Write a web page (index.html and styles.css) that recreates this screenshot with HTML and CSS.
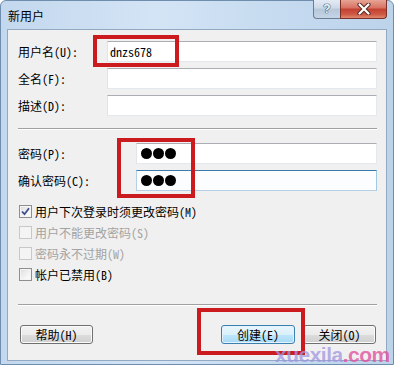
FILE: index.html
```html
<!DOCTYPE html>
<html lang="zh-CN">
<head>
<meta charset="utf-8">
<title>新用户</title>
<link rel="stylesheet" href="styles.css">
</head>
<body>
<div class="window">
  <div class="titlebar">
    <span class="title">新用户</span>
    <div class="caption">
      <div class="cap-help"><span class="qmark">?</span></div>
      <div class="cap-close">
        <svg width="14" height="12" viewBox="0 0 14 12">
          <path d="M2.5 1.5 L11.5 10.5 M11.5 1.5 L2.5 10.5" stroke="#5a2a26" stroke-width="4.2" stroke-linecap="round"/>
          <path d="M2.5 1.5 L11.5 10.5 M11.5 1.5 L2.5 10.5" stroke="#ffffff" stroke-width="2.2" stroke-linecap="round"/>
        </svg>
      </div>
    </div>
  </div>
  <div class="client">
    <div class="row">
      <span class="label">用户名(U):</span>
      <div class="input wide">dnzs678</div>
    </div>
    <div class="row">
      <span class="label">全名(F):</span>
      <div class="input wide"></div>
    </div>
    <div class="row">
      <span class="label">描述(D):</span>
      <div class="input wide"></div>
    </div>
    <div class="sep sep1"></div>
    <div class="row">
      <span class="label">密码(P):</span>
      <div class="input narrow"><span class="dots"><i></i><i></i><i></i></span></div>
    </div>
    <div class="row">
      <span class="label">确认密码(C):</span>
      <div class="input narrow focused"><span class="dots"><i></i><i></i><i></i></span></div>
    </div>
    <div class="checks">
      <div class="check">
        <span class="box checked">
          <svg width="9" height="9" viewBox="0 0 9 9"><path d="M1 4.5 L3.5 7.2 L8 1.2" fill="none" stroke="#3e4d8a" stroke-width="1.8"/></svg>
        </span>
        <span>用户下次登录时须更改密码(M)</span>
      </div>
      <div class="check disabled">
        <span class="box"></span>
        <span>用户不能更改密码(S)</span>
      </div>
      <div class="check disabled">
        <span class="box"></span>
        <span>密码永不过期(W)</span>
      </div>
      <div class="check">
        <span class="box"></span>
        <span>帐户已禁用(B)</span>
      </div>
    </div>
    <div class="sep sep2"></div>
    <div class="buttons">
      <div class="btn">帮助(H)</div>
      <div class="spacer"></div>
      <div class="btn default">创建(E)</div>
      <div class="btn">关闭(O)</div>
    </div>
  </div>
  <div class="mark mark1"></div>
  <div class="mark mark2"></div>
  <div class="mark mark3"></div>
  <div class="watermark"><span class="wm-a">xuexila</span><span class="wm-b">.com</span></div>
</div>
</body>
</html>
```
FILE: styles.css
```css
html, body {
  margin: 0;
  padding: 0;
}
body {
  width: 394px;
  height: 365px;
  overflow: hidden;
  font-family: "Noto Sans Mono CJK SC", "Noto Sans CJK SC", sans-serif;
  font-size: 12px;
  color: #000;
}
.window {
  position: relative;
  width: 394px;
  height: 365px;
  box-sizing: border-box;
  border: 1px solid #6f8eae;
  border-radius: 6px 6px 0 0;
  background: linear-gradient(90deg, #c3d8ee 0%, #d3e4f5 40%, #c6dbf0 70%, #bcd3ea 100%);
  display: flex;
  flex-direction: column;
}
.titlebar {
  height: 28px;
  display: flex;
  align-items: flex-start;
  padding-left: 7px;
  padding-right: 6px;
}
.title {
  margin-top: 7px;
  line-height: 16px;
  font-size: 12px;
  letter-spacing: 0;
}
.caption {
  margin-left: auto;
  display: flex;
  margin-top: -1px;
}
.cap-help {
  width: 27px;
  height: 19px;
  box-sizing: border-box;
  border: 1px solid #6c7d92;
  border-top: none;
  border-right: none;
  border-radius: 0 0 0 4px;
  background: linear-gradient(#e3ebf5 0%, #cdd9e7 45%, #b7c7da 50%, #c5d4e6 100%);
  display: flex;
  justify-content: center;
  align-items: center;
}
.qmark {
  font-family: "Liberation Sans", sans-serif;
  font-weight: bold;
  font-size: 12px;
  line-height: 12px;
  color: #f4f7fb;
  text-shadow: 0 0 1px #31465e, 0 0 1px #31465e, 0 0 1px #31465e;
}
.cap-close {
  width: 47px;
  height: 19px;
  box-sizing: border-box;
  border: 1px solid #7a2f28;
  border-top: none;
  border-radius: 0 0 4px 0;
  background: linear-gradient(#e7a595 0%, #d67060 45%, #c2402f 50%, #cf5a45 80%, #e08a70 100%);
  display: flex;
  justify-content: center;
  align-items: center;
}
.client {
  margin-left: 6px;
  width: 380px;
  height: 332px;
  box-sizing: border-box;
  border: 1px solid #93a9c2;
  background: #f0f0f0;
  padding: 11px 9px 0 10px;
  display: flex;
  flex-direction: column;
}
.row {
  display: flex;
  align-items: center;
  height: 21px;
  margin-bottom: 6px;
}
.label {
  white-space: nowrap;
  line-height: 16px;
}
.input {
  margin-left: auto;
  height: 21px;
  box-sizing: border-box;
  border: 1px solid;
  border-color: #abadb3 #e3e9ef #e3e9ef #e2e3ea;
  background: #fff;
  display: flex;
  align-items: center;
  padding-left: 2px;
  line-height: 14px;
}
.input.wide { width: 270px; }
.input.narrow { width: 241px; padding-left: 4px; }
.input.focused {
  border-color: #3d7bad #a4c9e3 #b5cfe7 #b5cfe7;
  background: #fbfdfe;
}
.dots {
  display: flex;
  gap: 1px;
}
.dots i {
  display: block;
  width: 11px;
  height: 11px;
  border-radius: 50%;
  background: #000;
}
.sep {
  height: 1px;
  background: #a0a0a0;
  border-bottom: 1px solid #ffffff;
}
.sep1 {
  margin-top: 6px;
  margin-bottom: 13px;
}
.checks {
  margin-top: 8px;
  display: flex;
  flex-direction: column;
  gap: 8px;
}
.check {
  display: flex;
  align-items: center;
  height: 13px;
  white-space: nowrap;
  line-height: 14px;
}
.box {
  width: 13px;
  height: 13px;
  box-sizing: border-box;
  border: 1px solid #8f8f8f;
  background: linear-gradient(135deg, #dcdcdc 0%, #f0f0f0 50%, #ffffff 100%);
  box-shadow: inset 0 0 0 1px #f4f4f4;
  margin-left: 1px;
  margin-right: 3px;
  display: flex;
  justify-content: center;
  align-items: center;
}
.check.disabled { color: #a3a3a3; }
.check.disabled .box {
  border-color: #c8c8c8;
  background: #f4f4f4;
  box-shadow: none;
}
.sep2 {
  margin-top: 23px;
}
.buttons {
  margin-top: 19px;
  display: flex;
  padding-left: 2px;
  padding-right: 1px;
}
.spacer { flex: 1; }
.btn {
  width: 73px;
  height: 19px;
  box-sizing: border-box;
  border: 1px solid #707070;
  border-radius: 3px;
  background: linear-gradient(#f2f2f2 0%, #ebebeb 50%, #dddddd 51%, #cfcfcf 100%);
  box-shadow: inset 0 0 0 1px #fbfbfb;
  display: flex;
  justify-content: center;
  align-items: center;
  line-height: 14px;
}
.btn + .btn { margin-left: 8px; }
.btn.default {
  width: 74px;
  border-color: #3c7fb1;
  background: linear-gradient(#eaf6fd 0%, #d9f0fc 50%, #bee6fd 51%, #a7d9f5 100%);
  box-shadow: inset 0 0 0 1px #e3f2fb;
}
.mark {
  position: absolute;
  box-sizing: border-box;
  border: 4px solid #cc1b1f;
}
.mark1 { left: 92px; top: 34px; width: 86px; height: 32px; }
.mark2 { left: 116px; top: 137px; width: 78px; height: 60px; }
.mark3 { left: 196px; top: 307px; width: 108px; height: 47px; }
.watermark {
  position: absolute;
  left: 274px;
  top: 344px;
  font-family: "Liberation Sans", sans-serif;
  font-weight: bold;
  font-size: 21px;
  line-height: 20px;
  letter-spacing: -0.5px;
}
.wm-a { color: rgba(160, 150, 225, 0.75); }
.wm-b { color: rgba(225, 80, 160, 0.8); }
```
